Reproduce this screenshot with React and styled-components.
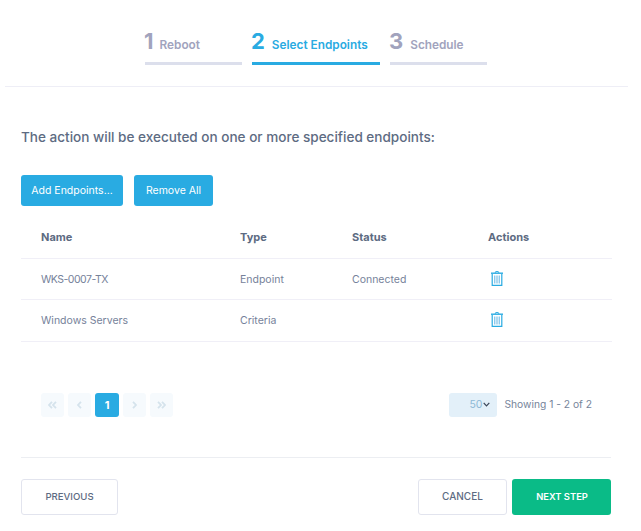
import React from 'react';
import styled, { createGlobalStyle } from 'styled-components';

const GlobalStyle = createGlobalStyle`
  html, body {
    margin: 0;
    padding: 0;
    background: #ffffff;
    font-family: 'Inter', 'Liberation Sans', sans-serif;
  }
`;

const steps = [
  { num: 1, label: 'Reboot', width: 97, gap: 6 },
  { num: 2, label: 'Select Endpoints', width: 128, gap: 7, active: true },
  { num: 3, label: 'Schedule', width: 97, gap: 7 },
];

const rows = [
  { name: 'WKS-0007-TX', type: 'Endpoint', status: 'Connected', height: 41, pad: 2, tight: true },
  { name: 'Windows Servers', type: 'Criteria', status: '', height: 42, pad: 1 },
];

const TrashIcon = () => (
  <svg width="12" height="15" viewBox="0 0 12 15" fill="none">
    <path d="M4.2 1.8 L4.7 .6 H7.3 L7.8 1.8" stroke="#29abe2" strokeWidth="1" />
    <path d="M0 2.2 H12" stroke="#29abe2" strokeWidth="1.4" />
    <path d="M1.2 3 V14.4 H10.8 V3" stroke="#29abe2" strokeWidth="1.2" />
    <rect x="3" y="4.5" width="1.4" height="8" fill="#8cc9ec" />
    <rect x="5.3" y="4.5" width="1.4" height="8" fill="#8cc9ec" />
    <rect x="7.6" y="4.5" width="1.4" height="8" fill="#8cc9ec" />
  </svg>
);

const Chevron = ({ dir = 'left', double }) => (
  <svg width="9" height="8" viewBox="0 0 9 8" fill="none" stroke="#d5e3ec" strokeWidth="1.8">
    {dir === 'left' ? (
      <>
        <path d={double ? 'M4 .8 L1 4 L4 7.2' : 'M6 .8 L3 4 L6 7.2'} />
        {double && <path d="M8 .8 L5 4 L8 7.2" />}
      </>
    ) : (
      <>
        <path d={double ? 'M1 .8 L4 4 L1 7.2' : 'M3 .8 L6 4 L3 7.2'} />
        {double && <path d="M5 .8 L8 4 L5 7.2" />}
      </>
    )}
  </svg>
);

const App = () => {
  return (
    <Page>
      <GlobalStyle />
      <Stepper>
        {steps.map(step => (
          <Step key={step.num} $width={step.width} $active={step.active}>
            <StepTitle $gap={step.gap}>
              <StepNum>{step.num}</StepNum>
              <StepLabel>{step.label}</StepLabel>
            </StepTitle>
          </Step>
        ))}
      </Stepper>
      <Content>
        <Heading>The action will be executed on one or more specified endpoints:</Heading>
        <Toolbar>
          <BlueButton $width={102}>Add Endpoints...</BlueButton>
          <BlueButton $width={79}>Remove All</BlueButton>
        </Toolbar>
        <Table>
          <thead>
            <tr>
              <Th $width={199}>Name</Th>
              <Th $width={112}>Type</Th>
              <Th $width={136}>Status</Th>
              <Th>Actions</Th>
            </tr>
          </thead>
          <tbody>
            {rows.map(row => (
              <tr key={row.name}>
                <Td $height={row.height} $pad={row.pad} $tight={row.tight}>{row.name}</Td>
                <Td $height={row.height} $pad={row.pad}>{row.type}</Td>
                <Td $height={row.height} $pad={row.pad}>{row.status}</Td>
                <Td $height={row.height} $pad={row.pad}>
                  <IconCell>
                    <TrashIcon />
                  </IconCell>
                </Td>
              </tr>
            ))}
          </tbody>
        </Table>
        <PagerRow>
          <Pages>
            <PageBtn><Chevron double /></PageBtn>
            <PageBtn><Chevron /></PageBtn>
            <PageBtn $active>1</PageBtn>
            <PageBtn><Chevron dir="right" /></PageBtn>
            <PageBtn><Chevron dir="right" double /></PageBtn>
          </Pages>
          <PagerInfo>
            <PerPage>
              50
              <svg width="7" height="5" viewBox="0 0 7 5" fill="none" stroke="#3a4658" strokeWidth="1.2">
                <path d="M.7 .8 L3.5 3.8 L6.3 .8" />
              </svg>
            </PerPage>
            <Showing>Showing 1 - 2 of 2</Showing>
          </PagerInfo>
        </PagerRow>
      </Content>
      <Footer>
        <OutlineButton $width={97} $size={9.6}>PREVIOUS</OutlineButton>
        <FooterRight>
          <OutlineButton $width={89} $size={10}>CANCEL</OutlineButton>
          <NextButton>NEXT STEP</NextButton>
        </FooterRight>
      </Footer>
    </Page>
  );
};

const Page = styled.div`
  width: 641px;
  height: 531px;
  overflow: hidden;
  box-sizing: border-box;
`;

const Stepper = styled.div`
  display: flex;
  gap: 10px;
  height: 58px;
  margin: 0 13px 0 5px;
  padding: 28px 0 0 140px;
  border-bottom: 1px solid #eeeef6;
`;

const Step = styled.div`
  width: ${props => props.$width}px;
  height: 37px;
  box-sizing: border-box;
  border-bottom: 3px solid ${props => (props.$active ? '#29abe2' : '#dcdfec')};
  color: ${props => (props.$active ? '#29abe2' : '#a1a3bd')};
`;

const StepTitle = styled.div`
  display: flex;
  align-items: baseline;
  gap: ${props => props.$gap}px;
  margin-left: -1px;
`;

const StepNum = styled.span`
  font-size: 22px;
  line-height: 26px;
  font-weight: 700;
`;

const StepLabel = styled.span`
  font-size: 11.8px;
  font-weight: 600;
`;

const Content = styled.div`
  padding: 40px 29px 0 21px;
`;

const Heading = styled.div`
  font-size: 13.55px;
  line-height: 20px;
  font-weight: 500;
  color: #5d6b82;
`;

const Toolbar = styled.div`
  display: flex;
  gap: 11px;
  margin-top: 28px;
`;

const BlueButton = styled.button`
  width: ${props => props.$width}px;
  height: 31px;
  padding: 0;
  border: none;
  border-radius: 3px;
  background: #29abe2;
  color: #ffffff;
  font-family: inherit;
  font-size: 10.5px;
`;

const Table = styled.table`
  width: 591px;
  border-collapse: collapse;
  table-layout: fixed;
  margin-top: 10px;
`;

const Th = styled.th`
  width: ${props => (props.$width ? `${props.$width}px` : 'auto')};
  height: 42px;
  padding: 1px 0 0 20px;
  text-align: left;
  font-size: 11px;
  font-weight: 700;
  color: #5d6b82;
  border-bottom: 1px solid #f0eff7;
  box-sizing: border-box;
`;

const Td = styled.td`
  height: ${props => props.$height}px;
  padding: ${props => props.$pad}px 0 0 20px;
  font-size: 10.5px;
  letter-spacing: ${props => (props.$tight ? '-0.5px' : 'normal')};
  color: #76829a;
  border-bottom: 1px solid #f0eff7;
  box-sizing: border-box;
`;

const IconCell = styled.div`
  display: flex;
  padding-left: 3px;
  margin-top: -3px;
`;

const PagerRow = styled.div`
  display: flex;
  justify-content: space-between;
  align-items: center;
  margin-top: 51px;
  padding: 0 20px 0 20px;
`;

const Pages = styled.div`
  display: flex;
  gap: 4px;
`;

const PageBtn = styled.div`
  display: flex;
  align-items: center;
  justify-content: center;
  width: ${props => (props.$active ? '24px' : '23px')};
  height: 24px;
  border-radius: 3px;
  background: ${props => (props.$active ? '#29abe2' : '#f6fafd')};
  color: #ffffff;
  font-size: 11px;
  font-weight: 700;
`;

const PagerInfo = styled.div`
  display: flex;
  align-items: center;
  gap: 7px;
`;

const PerPage = styled.div`
  display: flex;
  align-items: center;
  justify-content: flex-end;
  gap: 1px;
  width: 48px;
  height: 24px;
  padding: 0 7px 1px 0;
  box-sizing: border-box;
  border-radius: 3px;
  background: #e3f0f9;
  color: #8db9d6;
  font-size: 10.5px;
`;

const Showing = styled.div`
  padding-bottom: 2px;
  font-size: 10.25px;
  color: #76849a;
`;

const Footer = styled.div`
  display: flex;
  justify-content: space-between;
  margin: 40px 30px 0 21px;
  padding-top: 21px;
  border-top: 1px solid #eceef2;
`;

const FooterRight = styled.div`
  display: flex;
  gap: 5px;
`;

const OutlineButton = styled.button`
  width: ${props => props.$width}px;
  height: 36px;
  padding: 0 0 1px;
  border: 1px solid #e2e4ee;
  border-radius: 3px;
  background: #ffffff;
  color: #5d6b82;
  font-family: inherit;
  font-size: ${props => props.$size}px;
  font-weight: 500;
`;

const NextButton = styled.button`
  width: 99px;
  height: 36px;
  padding: 0 0 1px 1px;
  border: none;
  border-radius: 3px;
  background: #0abb87;
  color: #ffffff;
  font-family: inherit;
  font-size: 9.4px;
  font-weight: 600;
`;

export default App;
